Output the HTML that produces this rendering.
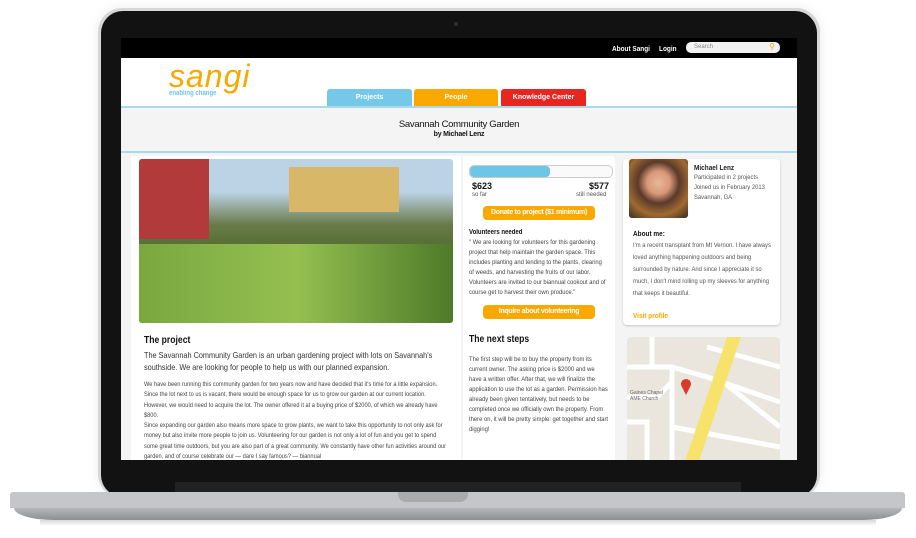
<!DOCTYPE html>
<html><head><style>
*{margin:0;padding:0;box-sizing:border-box}
body{width:916px;height:538px;background:#fff;position:relative;overflow:hidden;font-family:"Liberation Sans",sans-serif}
.abs{position:absolute}
.scr{left:121px;top:38px;width:676px;height:422px;background:#f4f4f4;overflow:hidden}
.t{font-size:7px;color:#444;line-height:10.5px}
.n{transform:scaleX(.86);transform-origin:0 0}
.btn{background:#f9a800;color:#fff;font-size:7px;font-weight:bold;text-align:center;border-radius:4px}
</style></head><body>
<div class="abs" style="left:98px;top:8px;width:722px;height:490px;border-radius:24px;background:#d6d7d9;box-shadow:0 0 12px rgba(0,0,0,.08)"></div>
<div class="abs" style="left:101px;top:11px;width:716px;height:486px;border-radius:22px;background:#121212"></div>
<div class="abs" style="left:175px;top:482px;width:566px;height:12px;background:#222"></div>
<div class="abs" style="left:454px;top:22px;width:4px;height:4px;border-radius:2px;background:#333"></div>
<div class="abs" style="left:10px;top:492px;width:895px;height:16px;background:#c5c6c9;border-radius:3px 3px 0 0"></div>
<div class="abs" style="top:492px;width:70px;height:10px;background:#a9aaac;border-radius:0 0 8px 8px;left:398px"></div>
<div class="abs" style="left:14px;top:508px;width:888px;height:12px;background:linear-gradient(#b5b6b9,#8e8f92);border-radius:0 0 40px 40px/0 0 12px 12px"></div>
<div class="abs" style="left:40px;top:520px;width:836px;height:6px;background:linear-gradient(rgba(0,0,0,.15),rgba(0,0,0,0));"></div>
<div class="abs scr">
 <div class="abs" style="left:0;top:0;width:676px;height:20px;background:#000"></div>
 <div class="abs n" style="left:491px;top:6px;font-size:7.5px;color:#fff;font-weight:bold">About Sangi</div>
 <div class="abs n" style="left:538px;top:6px;font-size:7.5px;color:#fff;font-weight:bold">Login</div>
 <div class="abs" style="left:565px;top:4px;width:94px;height:11px;background:#f2f2f2;border-radius:5px;font-size:6px;color:#888;padding:2px 0 0 8px">Search<span style="position:absolute;right:5px;top:0;color:#f9a800;font-size:8px">⚲</span></div>
 <div class="abs" style="left:0;top:20px;width:676px;height:48px;background:#fff"></div>
 <div class="abs" style="left:48px;top:20px;font-size:32px;color:#f9a800;font-style:italic;letter-spacing:1px">sangi</div>
 <div class="abs n" style="left:48px;top:52px;font-size:7px;color:#6ec6e6;font-weight:bold">enabling change</div>
 <div class="abs" style="left:206px;top:51px;width:85px;height:18px;background:#75c8e8;border-radius:3px 3px 0 0;color:#fff;font-size:7px;font-weight:bold;text-align:center;padding-top:5px">Projects</div>
 <div class="abs" style="left:293px;top:51px;width:84px;height:18px;background:#f9a800;border-radius:3px 3px 0 0;color:#fff;font-size:7px;font-weight:bold;text-align:center;padding-top:5px">People</div>
 <div class="abs" style="left:380px;top:51px;width:85px;height:18px;background:#e82620;border-radius:3px 3px 0 0;color:#fff;font-size:7px;font-weight:bold;text-align:center;padding-top:5px">Knowledge Center</div>
 <div class="abs" style="left:0;top:68px;width:676px;height:2px;background:#a8daea"></div>
 <div class="abs" style="left:0;top:81px;width:676px;text-align:center;font-size:9.5px;color:#111;letter-spacing:-.3px">Savannah Community Garden</div>
 <div class="abs" style="left:0;top:93px;width:676px;text-align:center;font-size:7px;color:#111;font-weight:bold;letter-spacing:-.2px">by Michael Lenz</div>
 <div class="abs" style="left:0;top:113px;width:676px;height:2px;background:#a8daea"></div>
 <div class="abs" style="left:10px;top:118px;width:330px;height:310px;background:#fff"></div>
 <div class="abs" style="left:18px;top:121px;width:314px;height:164px;border-radius:3px;overflow:hidden;background:linear-gradient(#bcd3e6 0,#bcd3e6 20%,#6a7a4a 40%,#4a6a2a 60%,#7aa040 80%,#5a8a30 100%)">
  <div class="abs" style="left:0;top:0;width:70px;height:80px;background:#b23a3a"></div>
  <div class="abs" style="left:150px;top:8px;width:110px;height:45px;background:#d8b868"></div>
  <div class="abs" style="left:0;top:85px;width:314px;height:79px;background:linear-gradient(90deg,#7aa840,#95c050,#4e7a2a)"></div>
 </div>
 <div class="abs n" style="left:23px;top:297px;font-size:10px;color:#111;font-weight:bold">The project</div>
 <div class="abs n" style="left:23px;top:311px;width:340px;font-size:8.5px;color:#333;line-height:12px">The Savannah Community Garden is an urban gardening project with lots on Savannah's southside. We are looking for people to help us with our planned expansion.</div>
 <div class="abs t n" style="left:23px;top:342px;width:356px;font-size:6.6px;line-height:10.3px">We have been running this community garden for two years now and have decided that it's time for a little expansion. Since the lot next to us is vacant, there would be enough space for us to grow our garden at our current location. However, we would need to acquire the lot. The owner offered it at a buying price of $2000, of which we already have $800.<br>Since expanding our garden also means more space to grow plants, we want to take this opportunity to not only ask for money but also invite more people to join us. Volunteering for our garden is not only a lot of fun and you get to spend some great time outdoors, but you are also part of a great community. We constantly have other fun activities around our garden, and of course celebrate our — dare I say famous? — biannual</div>
 <div class="abs" style="left:342px;top:118px;width:152px;height:310px;background:#fff;border-radius:0 4px 0 0"></div>
 <div class="abs" style="left:348px;top:127px;width:144px;height:13px;border:1px solid #ccc;border-radius:5px;background:#fafafa"></div>
 <div class="abs" style="left:349px;top:128px;width:80px;height:11px;border-radius:4px;background:#6ec6e6"></div>
 <div class="abs" style="left:351px;top:143px;font-size:9px;font-weight:bold;color:#111">$623</div>
 <div class="abs" style="left:351px;top:154px;font-size:6px;color:#555">so far</div>
 <div class="abs" style="left:468px;top:143px;font-size:9px;font-weight:bold;color:#111">$577</div>
 <div class="abs" style="left:455px;top:154px;font-size:6px;color:#555">still needed</div>
 <div class="abs btn" style="left:362px;top:168px;width:112px;height:14px;padding-top:3px;letter-spacing:-.3px">Donate to project ($1 minimum)</div>
 <div class="abs n" style="left:348px;top:191px;font-size:7px;font-weight:bold;color:#111">Volunteers needed</div>
 <div class="abs t n" style="left:348px;top:200px;width:162px;font-size:6.8px;line-height:10px">" We are looking for volunteers for this gardening project that help maintain the garden space. This includes planting and tending to the plants, clearing of weeds, and harvesting the fruits of our labor. Volunteers are invited to our biannual cookout and of course get to harvest their own produce."</div>
 <div class="abs btn" style="left:362px;top:267px;width:112px;height:14px;padding-top:3px;letter-spacing:-.3px">Inquire about volunteering</div>
 <div class="abs n" style="left:348px;top:296px;font-size:10px;font-weight:bold;color:#111">The next steps</div>
 <div class="abs t n" style="left:348px;top:317px;width:162px;font-size:6.8px;line-height:10px">The first step will be to buy the property from its current owner. The asking price is $2000 and we have a written offer. After that, we will finalize the application to use the lot as a garden. Permission has already been given tentatively, but needs to be completed once we officially own the property. From there on, it will be pretty simple: get together and start digging!</div>
 <div class="abs" style="left:502px;top:121px;width:157px;height:166px;background:#fff;border-radius:4px;box-shadow:0 1px 2px rgba(0,0,0,.2)"></div>
 <div class="abs" style="left:508px;top:121px;width:59px;height:59px;border-radius:3px;background:radial-gradient(circle at 50% 40%,#e8b898 0,#d89878 25%,#5a3a2a 45%,#a06a30 70%,#3a2a20 100%)"></div>
 <div class="abs n" style="left:573px;top:125px;font-size:7.5px;font-weight:bold;color:#222">Michael Lenz</div>
 <div class="abs t n" style="left:573px;top:135px;font-size:6.8px;line-height:10px;color:#555;width:100px">Participated in 2 projects<br>Joined us in February 2013<br>Savannah, GA</div>
 <div class="abs n" style="left:512px;top:191px;font-size:7.5px;font-weight:bold;color:#111">About me:</div>
 <div class="abs t n" style="left:512px;top:202px;width:162px;font-size:6.8px;line-height:12px;color:#555">I'm a recent transplant from Mt Vernon. I have always loved anything happening outdoors and being surrounded by nature. And since I appreciate it so much, I don't mind rolling up my sleeves for anything that keeps it beautiful.</div>
 <div class="abs n" style="left:512px;top:273px;font-size:7.5px;font-weight:bold;color:#f9a800">Visit profile</div>
 <div class="abs" style="left:506px;top:299px;width:153px;height:130px;background:#ebe6dd;border-radius:4px 4px 0 0;overflow:hidden">
  <svg width="153" height="130"><g stroke="#fff" stroke-width="5" fill="none"><path d="M0 30 L45 30 L45 130"/><path d="M25 0 L25 30"/><path d="M0 60 L30 60 L45 45"/><path d="M45 30 L80 40 L153 65"/><path d="M80 10 L153 30"/><path d="M45 90 L153 110"/><path d="M0 85 L20 85 L20 130"/><path d="M90 40 L153 90"/></g><path d="M100 0 L114 0 L70 130 L56 130Z" fill="#f7e26b"/><path d="M55 50 a5 5 0 1 1 8 0 L59 58Z" fill="#d93a2a"/><text x="3" y="57" font-size="5" fill="#666" font-family="Liberation Sans">Gaines Chapel</text><text x="3" y="63" font-size="5" fill="#666" font-family="Liberation Sans">AME Church</text></svg>
 </div>
</div>
</body></html>
